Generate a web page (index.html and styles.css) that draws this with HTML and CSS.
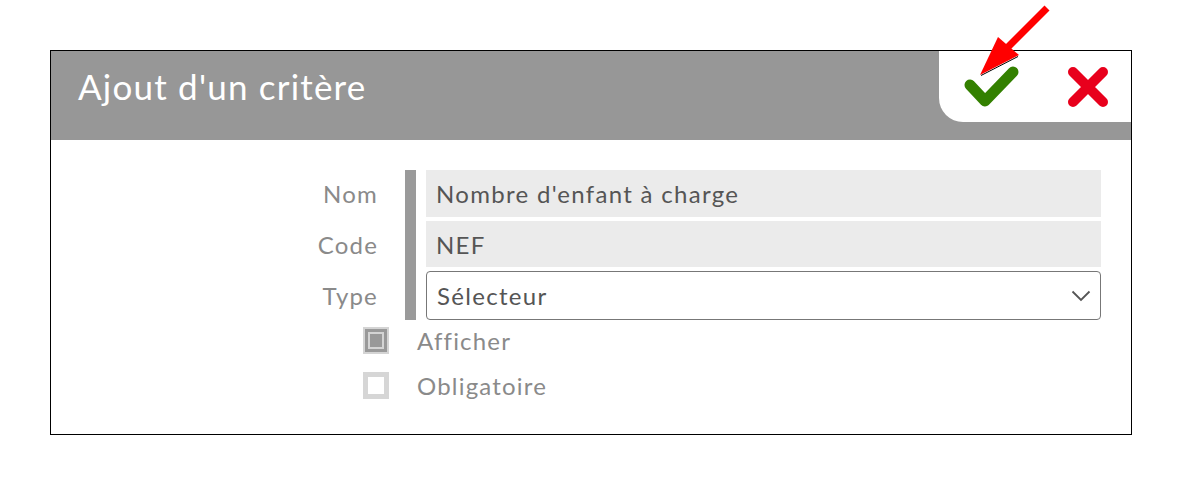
FILE: index.html
```html
<!DOCTYPE html>
<html lang="fr">
<head>
<meta charset="utf-8">
<title>Ajout d'un critère</title>
<link rel="stylesheet" href="styles.css">
</head>
<body>
<div class="page">
  <div class="dialog">
    <div class="header">
      <h1 class="title">Ajout d'un critère</h1>
      <div class="actions">
        <button class="btn btn-ok" aria-label="Valider">
          <svg width="58" height="44" viewBox="0 0 58 44"><path d="M7 20 L22 36 L50 7" fill="none" stroke="#338000" stroke-width="11" stroke-linecap="round" stroke-linejoin="round"/></svg>
        </button>
        <button class="btn btn-cancel" aria-label="Annuler">
          <svg width="42" height="42" viewBox="0 0 42 42"><path d="M6 6 L36 36 M36 6 L6 36" fill="none" stroke="#e8001c" stroke-width="10" stroke-linecap="round"/></svg>
        </button>
      </div>
    </div>
    <div class="body">
      <div class="form">
        <label class="label">Nom</label>
        <div class="bar"></div>
        <div class="field filled">Nombre d'enfant à charge</div>
        <label class="label">Code</label>
        <div class="field filled">NEF</div>
        <label class="label">Type</label>
        <div class="field select">
          <span>Sélecteur</span>
          <svg width="20" height="12" viewBox="0 0 20 12"><path d="M1.5 1.5 L10 10 L18.5 1.5" fill="none" stroke="#555" stroke-width="1.8"/></svg>
        </div>
      </div>
      <div class="checks">
        <div class="check-row"><span class="box checked"><span class="inner"></span></span><span class="check-label">Afficher</span></div>
        <div class="check-row"><span class="box"></span><span class="check-label">Obligatoire</span></div>
      </div>
    </div>
  </div>
  <svg class="arrow" width="85" height="85" viewBox="0 0 85 85">
    <path d="M11 75.5 L48 56.5" stroke="#000" stroke-width="1" fill="none"/>
    <polygon points="74.5,5.5 79.5,10.5 40.5,49.5 35.5,44.5" fill="#ff0000"/>
    <polygon points="10,75 28,37 49,55" fill="#ff0000"/>
  </svg>
</div>
</body>
</html>
```
FILE: styles.css
```css
* { box-sizing: border-box; }
html, body { margin: 0; padding: 0; background: #fff; }
body { font-family: "Lato", "Liberation Sans", sans-serif; }
.page { position: relative; width: 1182px; height: 485px; padding: 50px 0 0 50px; }
.dialog { width: 1082px; height: 385px; border: 1px solid #000; background: #fff; }
.header { height: 89px; background: #979797; display: flex; justify-content: space-between; align-items: flex-start; }
.title { margin: 0; padding: 15px 0 0 27px; color: #fff; font-weight: 400; font-size: 35px; line-height: 40px; letter-spacing: 1.2px; }
.actions { width: 192px; height: 71px; background: #fff; border-bottom-left-radius: 24px; display: flex; align-items: center; padding: 0 0 0 24px; }
.btn { border: 0; background: none; padding: 0; display: flex; cursor: pointer; }
.btn-cancel { margin-left: 46px; }
.body { padding-top: 30px; }
.form { display: grid; grid-template-columns: 326px 39px 10px 675px; grid-template-rows: 47px 46px 49px; row-gap: 4px; }
.label { grid-column: 1; justify-self: end; align-self: center; color: #8a8a8a; font-size: 24px; letter-spacing: 1.2px; margin-right: -1px; }
.bar { grid-column: 2; grid-row: 1 / 4; background: #9a9a9a; margin-left: 28px; width: 11px; }
.field { grid-column: 4; display: flex; align-items: center; padding-left: 10px; color: #555; font-size: 24px; letter-spacing: 1.3px; }
.filled { background: #ebebeb; }
.select { background: #fff; border: 1px solid #777; border-radius: 4px; justify-content: space-between; padding-right: 9px; }
.checks { display: flex; flex-direction: column; gap: 18px; padding: 7px 0 0 312px; }
.check-row { display: flex; align-items: center; gap: 28px; height: 27px; }
.box { width: 26px; height: 27px; border: 5px solid #d6d6d6; background: #fff; display: flex; }
.box.checked { border: 2px solid #d4d4d4; background: #d4d4d4; }
.box.checked .inner { flex: 1; border: 3px solid #999; background: #999; box-shadow: inset 0 0 0 2px #d4d4d4; }
.check-label { color: #8a8a8a; font-size: 24px; letter-spacing: 1.2px; }
.arrow { position: absolute; left: 970px; top: 0; }
```
